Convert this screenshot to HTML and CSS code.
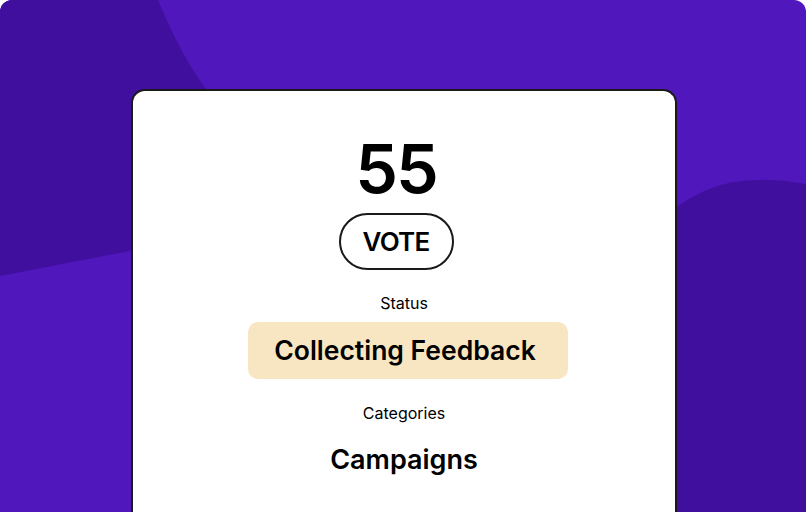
FILE: index.html
```html
<!DOCTYPE html>
<html>
<head>
<meta charset="utf-8">
<link rel="stylesheet" href="styles.css">
</head>
<body>
<div class="frame">
  <svg class="bg" width="806" height="512" viewBox="0 0 806 512" preserveAspectRatio="none">
    <rect width="806" height="512" fill="#4f17bc"/>
    <path d="M0 0 L158 0 C175 40 190 70 215 100 L135 250 L0 276 Z" fill="#410f9e"/>
    <path d="M660 220 C700 185 740 172 806 184 L806 512 L660 512 Z" fill="#410f9e"/>
  </svg>
  <div class="card">
    <div class="votes">55</div>
    <div class="vote-btn">VOTE</div>
    <div class="label status-label">Status</div>
    <div class="status">Collecting Feedback</div>
    <div class="label cat-label">Categories</div>
    <div class="category">Campaigns</div>
  </div>
</div>
</body>
</html>
```
FILE: styles.css
```css
* { box-sizing: border-box; }
html, body { margin: 0; padding: 0; background: #fff; }
body { width: 806px; height: 512px; overflow: hidden; font-family: Inter, "Noto Sans", sans-serif; color: #000; }
.frame {
  position: relative;
  width: 806px;
  height: 512px;
  border-radius: 12px 12px 0 0;
  overflow: hidden;
  padding: 89px 129px 0 131px;
}
.bg { position: absolute; left: 0; top: 0; }
.card {
  position: relative;
  background: #fff;
  border: 2px solid #1a1a1a;
  border-bottom: none;
  border-radius: 14px 14px 0 0;
  height: 440px;
  display: flex;
  flex-direction: column;
  align-items: center;
}
.votes {
  font-size: 68px;
  font-weight: 600;
  line-height: 1;
  margin-top: 43px;
  margin-left: -16px;
  letter-spacing: -2px;
}
.vote-btn {
  margin-top: 11px;
  margin-left: -16px;
  width: 115px;
  height: 57px;
  border: 2px solid #1a1a1a;
  border-radius: 29px;
  display: flex;
  align-items: center;
  justify-content: center;
  font-size: 26px;
  font-weight: 600;
  letter-spacing: -0.8px;
}
.label { font-size: 16px; line-height: 20px; }
.status-label { margin-top: 23px; }
.status {
  margin-top: 9px;
  margin-left: 8px;
  width: 320px;
  height: 57px;
  background: #f7e6c1;
  border-radius: 10px;
  display: flex;
  align-items: center;
  justify-content: center;
  padding-right: 6px;
  padding-bottom: 2px;
  font-size: 26.5px;
  font-weight: 600;
  letter-spacing: 0;
}
.cat-label { margin-top: 24px; }
.category {
  margin-top: 20px;
  font-size: 27px;
  font-weight: 600;
  letter-spacing: 0;
}
```
